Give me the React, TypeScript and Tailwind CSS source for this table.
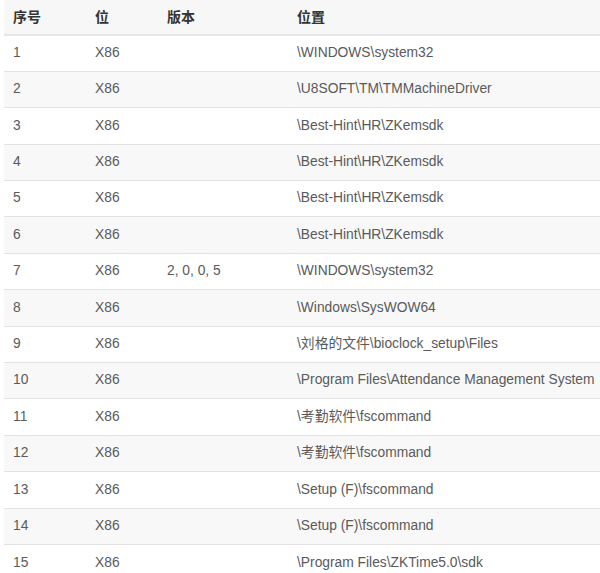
const rows: [string, string, string, string][] = [
  ["1", "X86", "", "\\WINDOWS\\system32"],
  ["2", "X86", "", "\\U8SOFT\\TM\\TMMachineDriver"],
  ["3", "X86", "", "\\Best-Hint\\HR\\ZKemsdk"],
  ["4", "X86", "", "\\Best-Hint\\HR\\ZKemsdk"],
  ["5", "X86", "", "\\Best-Hint\\HR\\ZKemsdk"],
  ["6", "X86", "", "\\Best-Hint\\HR\\ZKemsdk"],
  ["7", "X86", "2, 0, 0, 5", "\\WINDOWS\\system32"],
  ["8", "X86", "", "\\Windows\\SysWOW64"],
  ["9", "X86", "", "\\刘格的文件\\bioclock_setup\\Files"],
  ["10", "X86", "", "\\Program Files\\Attendance Management System"],
  ["11", "X86", "", "\\考勤软件\\fscommand"],
  ["12", "X86", "", "\\考勤软件\\fscommand"],
  ["13", "X86", "", "\\Setup (F)\\fscommand"],
  ["14", "X86", "", "\\Setup (F)\\fscommand"],
  ["15", "X86", "", "\\Program Files\\ZKTime5.0\\sdk"],
];

export default function App() {
  return (
    <div className="h-[573px] w-[600px] overflow-hidden bg-white pl-[4px] font-['Liberation_Sans','Noto_Sans_CJK_SC',sans-serif]">
      <table className="w-[596px] table-fixed border-collapse">
        <colgroup>
          <col className="w-[82px]" />
          <col className="w-[72px]" />
          <col className="w-[130px]" />
          <col />
        </colgroup>
        <thead>
          <tr className="h-[35px] border-b-2 border-[#e6e6e6] bg-[#f7f7f7] text-left text-[14px] font-bold text-[#333]">
            <th className="pl-[9px]">序号</th>
            <th className="pl-[9px]">位</th>
            <th className="pl-[9px]">版本</th>
            <th className="pl-[9px]">位置</th>
          </tr>
        </thead>
        <tbody>
          {rows.map((r, i) => (
            <tr
              key={r[0]}
              className={`h-[36.4px] border-t border-[#e3e3e3] text-[13.8px] text-[#5a5a5a] ${
                i % 2 === 1 ? "bg-[#f8f8f8]" : "bg-white"
              }`}
            >
              <td className="whitespace-nowrap pl-[9px]">{r[0]}</td>
              <td className="whitespace-nowrap pl-[9px]">{r[1]}</td>
              <td className="whitespace-nowrap pl-[9px]">{r[2]}</td>
              <td className="whitespace-nowrap pl-[9px]">{r[3]}</td>
            </tr>
          ))}
        </tbody>
      </table>
    </div>
  );
}
